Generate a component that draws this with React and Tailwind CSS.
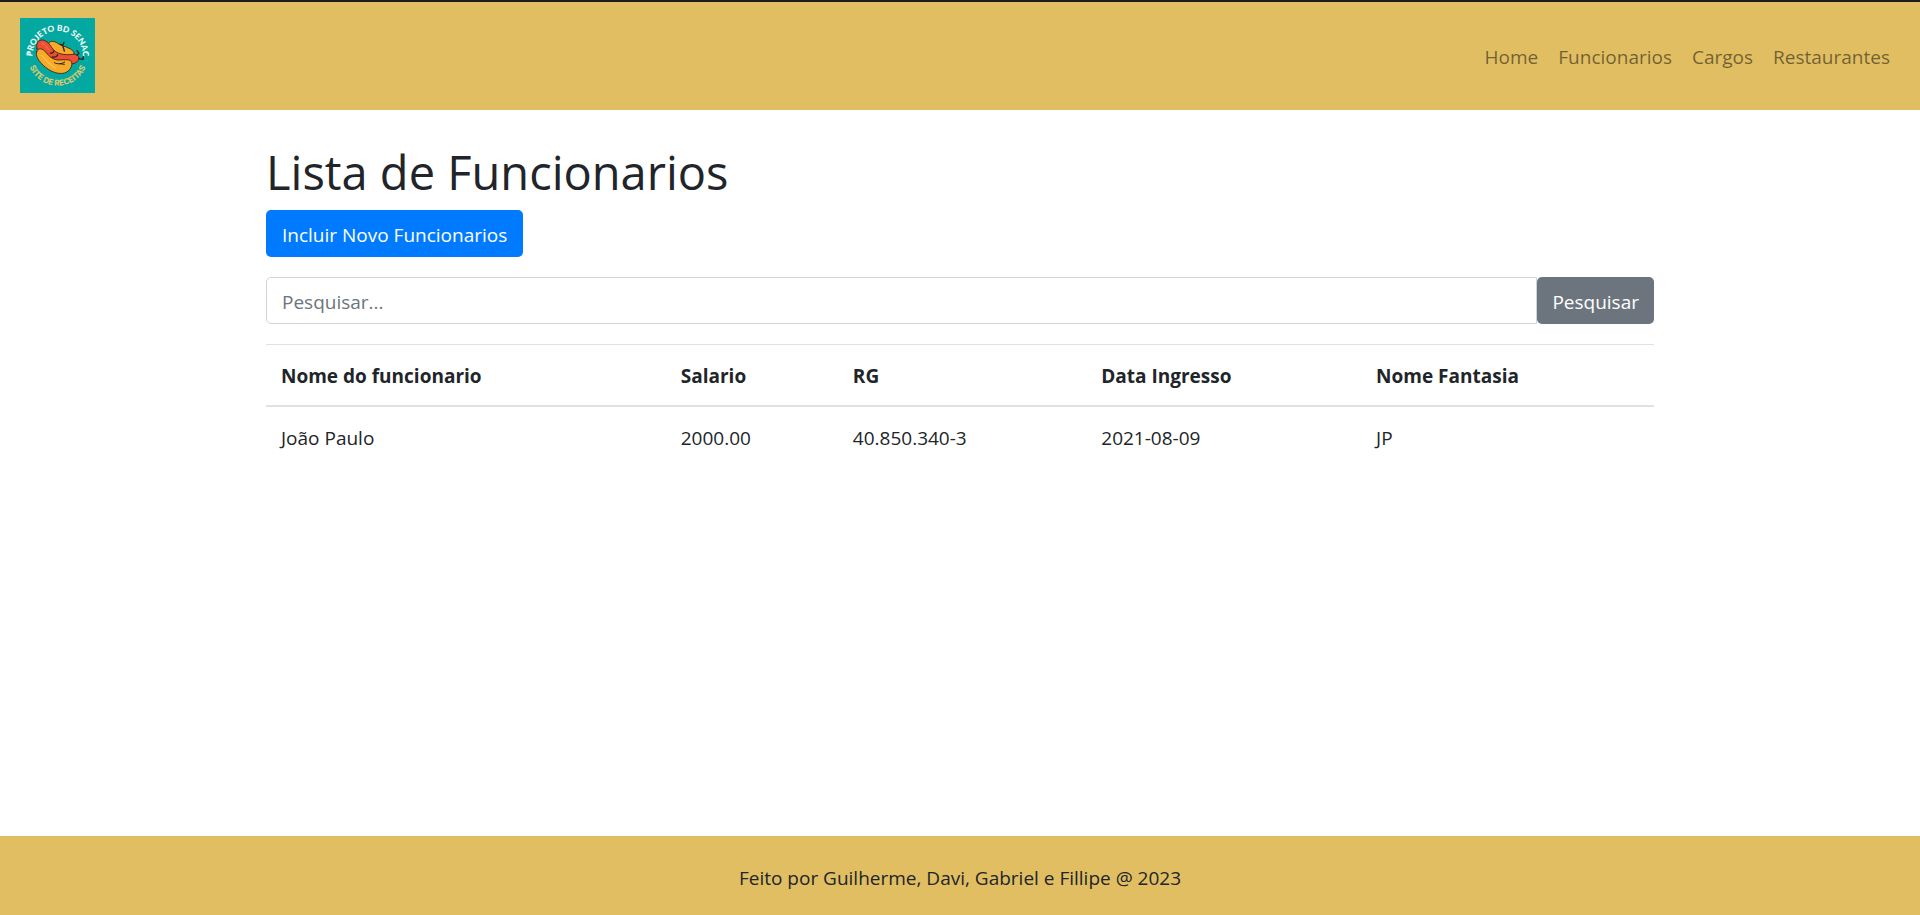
const navLinks = ['Home', 'Funcionarios', 'Cargos', 'Restaurantes'];

const columns = [
  { title: 'Nome do funcionario', width: 'w-[28.8%]' },
  { title: 'Salario', width: 'w-[12.4%]' },
  { title: 'RG', width: 'w-[17.9%]' },
  { title: 'Data Ingresso', width: 'w-[19.8%]' },
  { title: 'Nome Fantasia', width: 'w-[21.1%]' },
];

const rows = [['João Paulo', '2000.00', '40.850.340-3', '2021-08-09', 'JP']];

function Logo() {
  return (
    <svg viewBox="0 0 225 225" className="block size-[75px]" role="img" aria-label="Projeto BD Senac">
      <defs>
        <path id="arc-top" d="M37 115 A76 76 0 0 1 189 115" />
        <path id="arc-bottom" d="M22 112 A91 91 0 0 0 204 112" />
      </defs>
      <rect width="225" height="225" fill="#03a9a0" />
      <g textAnchor="middle">
        <text fontFamily="Lato, sans-serif" fontSize="25" fontWeight="900" fill="#f4fbf3">
          <textPath href="#arc-top" startOffset="50%">PROJETO BD SENAC</textPath>
        </text>
        <text fontFamily="Inter, sans-serif" fontSize="24" fontWeight="700" fill="#e3ca69">
          <textPath href="#arc-bottom" startOffset="50%">SITE DE RECEITAS</textPath>
        </text>
      </g>
      <circle cx="25" cy="104" r="3" fill="#f4fbf3" />
      <circle cx="202" cy="104" r="3" fill="#f4fbf3" />
      <g stroke="#2b211d" strokeWidth="2.5" strokeLinejoin="round" strokeLinecap="round">
        <path d="M83 82 C85 66 103 68 113 76 C128 86 150 87 161 101 C165 112 156 119 144 119 C119 121 94 108 83 82Z" fill="#f7a928" />
        <path d="M51 93 C47 76 55 65 68 66 C82 68 88 78 96 90 C108 109 135 112 158 109 C172 107 180 116 176 125 C171 136 157 139 143 138 C111 138 88 132 74 110 C66 100 56 104 51 93Z" fill="#f04e32" />
        <path d="M50 101 C53 88 68 91 77 102 C88 116 97 124 114 126 C128 126 147 122 154 130 C160 143 149 160 134 165 C108 172 79 153 65 137 C54 125 46 113 50 101Z" fill="#f7a928" />
        <g fill="none">
          <path d="M133 99 L128 82 M128 82 L121 79 M128 82 L132 73" strokeWidth="4" />
          <path d="M103 134 C114 140 124 138 134 132 M119 137 L133 139" strokeWidth="3" />
          <path d="M171 112 L177 106 L171 98" strokeWidth="4" />
          <path d="M176 122 L189 124 L190 116" strokeWidth="4" />
          <path d="M91 105 C96 107 101 103 101 99 M97 117 C104 119 111 115 113 110" strokeWidth="4" />
        </g>
      </g>
      <path d="M66 76 C75 78 80 87 87 96" fill="none" stroke="#ff7950" strokeWidth="3" strokeLinecap="round" />
      <path d="M65 112 C80 130 92 141 106 151" fill="none" stroke="#ffc34c" strokeWidth="4" strokeLinecap="round" />
    </svg>
  );
}

export default function App() {
  return (
    <div className="flex min-h-screen flex-col bg-white font-['Open_Sans','Noto_Sans',sans-serif] text-[19px] leading-[30px] text-[#212529]">
      <header className="flex items-center justify-between border-t-2 border-[#1c1b22] bg-[#e1be62] px-5 py-4">
        <a href="#home" className="block pb-px">
          <Logo />
        </a>
        <nav className="flex">
          {navLinks.map((label) => (
            <a key={label} href={`#${label.toLowerCase()}`} className="px-2.5 pt-2.5 pb-2 text-black/50">
              {label}
            </a>
          ))}
        </nav>
      </header>

      <main className="mx-auto w-full max-w-[1388px] flex-1 pt-8">
        <h1 className="mb-2 text-[47px] leading-[60px]">Lista de Funcionarios</h1>
        <button type="button" className="h-[47px] rounded-[5px] bg-[#007bff] px-4 pt-0.5 text-white">
          Incluir Novo Funcionarios
        </button>

        <form className="my-5 flex" onSubmit={(event) => event.preventDefault()}>
          <input
            type="search"
            aria-label="Pesquisar"
            placeholder="Pesquisar..."
            className="h-[47px] min-w-0 flex-1 rounded-l-[5px] border border-[#ced4da] px-[15px] pt-0.5 placeholder:text-[#6c757d]"
          />
          <button type="submit" className="h-[47px] rounded-[5px] bg-[#6c757d] px-[15px] pt-0.5 text-white">
            Pesquisar
          </button>
        </form>

        <table className="w-full table-fixed border-separate border-spacing-0 text-left">
          <thead>
            <tr>
              {columns.map(({ title, width }) => (
                <th key={title} scope="col" className={`${width} border-t border-b-2 border-[#dee2e6] px-[15px] pt-4 pb-3.5 font-bold`}>
                  {title}
                </th>
              ))}
            </tr>
          </thead>
          <tbody>
            {rows.map((row) => (
              <tr key={row[0]}>
                {row.map((value) => (
                  <td key={value} className="px-[15px] pt-4 pb-3.5">{value}</td>
                ))}
              </tr>
            ))}
          </tbody>
        </table>
      </main>

      <footer className="bg-[#e1be62] pt-[27px] pb-[22px] text-center">
        <p>Feito por Guilherme, Davi, Gabriel e Fillipe @ 2023</p>
      </footer>
    </div>
  );
}
